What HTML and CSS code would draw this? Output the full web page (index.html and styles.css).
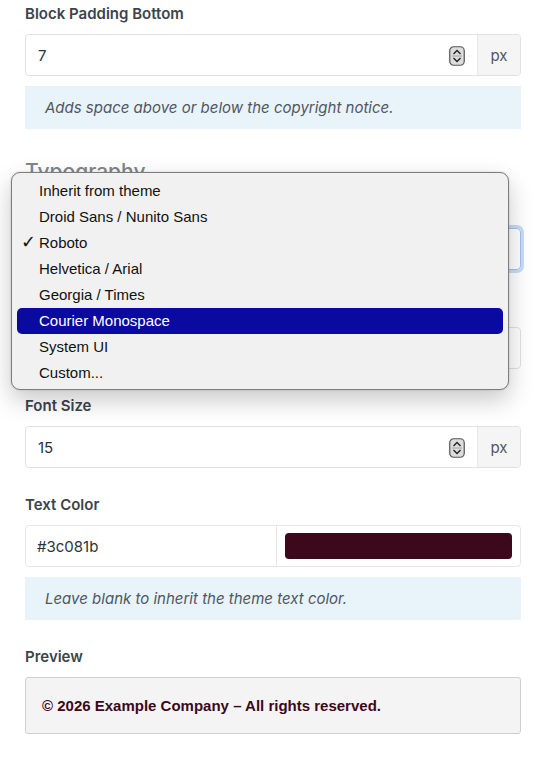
FILE: index.html
```html
<!DOCTYPE html>
<html lang="en">
<head>
  <meta charset="UTF-8">
  <title>Copyright Block Settings</title>
  <link rel="stylesheet" href="styles.css">
</head>
<body>
  <div class="panel">
    <div class="field">
      <label>Block Padding Bottom</label>
      <div class="input-group">
        <div class="number">
          <span class="value">7</span>
          <svg class="stepper" width="16" height="20" viewBox="0 0 16 20">
            <rect x="0.75" y="0.75" width="14.5" height="18.5" rx="4" fill="#dcdcdc" stroke="#555" stroke-width="1.2"/>
            <path d="M4.5 8 L8 4.6 L11.5 8" fill="none" stroke="#222" stroke-width="1.4"/>
            <path d="M4.5 12 L8 15.4 L11.5 12" fill="none" stroke="#222" stroke-width="1.4"/>
            <line x1="3" y1="10" x2="13" y2="10" stroke="#999" stroke-width="0.8"/>
          </svg>
        </div>
        <span class="unit">px</span>
      </div>
      <p class="help">Adds space above or below the copyright notice.</p>
    </div>

    <h3 class="section-title">Typography</h3>

    <div class="field font-family">
      <label>Font Family</label>
      <div class="select focused">Roboto</div>

      <!-- native select popup, open -->
      <ul class="menu">
        <li>Inherit from theme</li>
        <li>Droid Sans / Nunito Sans</li>
        <li class="checked">Roboto</li>
        <li>Helvetica / Arial</li>
        <li>Georgia / Times</li>
        <li class="active">Courier Monospace</li>
        <li>System UI</li>
        <li>Custom...</li>
      </ul>
    </div>

    <div class="field">
      <label>Font Weight</label>
      <div class="select">Bold</div>
    </div>

    <div class="field">
      <label>Font Size</label>
      <div class="input-group">
        <div class="number">
          <span class="value">15</span>
          <svg class="stepper" width="16" height="20" viewBox="0 0 16 20">
            <rect x="0.75" y="0.75" width="14.5" height="18.5" rx="4" fill="#dcdcdc" stroke="#555" stroke-width="1.2"/>
            <path d="M4.5 8 L8 4.6 L11.5 8" fill="none" stroke="#222" stroke-width="1.4"/>
            <path d="M4.5 12 L8 15.4 L11.5 12" fill="none" stroke="#222" stroke-width="1.4"/>
            <line x1="3" y1="10" x2="13" y2="10" stroke="#999" stroke-width="0.8"/>
          </svg>
        </div>
        <span class="unit">px</span>
      </div>
    </div>

    <div class="field">
      <label>Text Color</label>
      <div class="color-group">
        <span class="hex">#3c081b</span>
        <span class="swatch-wrap"><span class="swatch"></span></span>
      </div>
      <p class="help">Leave blank to inherit the theme text color.</p>
    </div>

    <div class="field">
      <label>Preview</label>
      <div class="preview">© 2026 Example Company – All rights reserved.</div>
    </div>
  </div>
</body>
</html>
```

FILE: styles.css
```css
body {
  margin: 0;
  background: #fff;
  font-family: Inter, "Liberation Sans", sans-serif;
  color: #3c434a;
}
.panel {
  padding: 4px 27px 0 25px;
}
.field {
  margin-bottom: 27px;
}
.field label {
  display: block;
  font-size: 15px;
  font-weight: 600;
  line-height: 20px;
  margin-bottom: 10px;
  color: #3c434a;
}
.input-group {
  display: flex;
  height: 42px;
  box-sizing: border-box;
  border: 1px solid #dfe1e4;
  border-radius: 4px;
  overflow: hidden;
}
.number {
  flex: 1;
  display: flex;
  align-items: center;
  padding: 0 12px 0 12px;
  font-size: 15px;
  color: #2c3338;
}
.number .value {
  flex: 1;
}
.stepper {
  display: block;
  margin-top: 1px;
}
.unit {
  width: 42px;
  display: flex;
  align-items: center;
  justify-content: center;
  background: #f5f5f5;
  border-left: 1px solid #e6e7e9;
  font-size: 15px;
  color: #50575e;
}
.help {
  margin: 10px 0 0;
  padding: 12px 20px;
  background: #e8f3fa;
  font-size: 15px;
  line-height: 19px;
  font-style: italic;
  color: #50575e;
}
.section-title {
  margin: 30px 0 13px;
  font-size: 21px;
  font-weight: 500;
  line-height: 26px;
  color: #80868b;
}
.select {
  height: 42px;
  box-sizing: border-box;
  border: 1px solid #dfe1e4;
  border-radius: 4px;
  padding: 0 12px;
  display: flex;
  align-items: center;
  font-size: 15px;
  color: #2c3338;
}
.select.focused {
  border-color: #9ec2f0;
  box-shadow: 0 0 0 3px #c9dcf6;
}
.font-family {
  position: relative;
}
.menu {
  position: absolute;
  left: -14px;
  top: -26px;
  width: 498px;
  height: 218px;
  box-sizing: border-box;
  margin: 0;
  padding: 5px 5px;
  list-style: none;
  background: #f1f1f1;
  border: 1px solid #7d7d7d;
  border-radius: 9px;
  box-shadow: 0 10px 24px rgba(0, 0, 0, 0.22), 0 0 2px rgba(0, 0, 0, 0.2);
  font-family: "Liberation Sans", Arial, sans-serif;
  font-size: 15px;
  color: #111;
  z-index: 5;
}
.menu li {
  height: 26px;
  line-height: 26px;
  padding-left: 22px;
  border-radius: 5px;
  position: relative;
}
.menu li.checked::before {
  content: "✓";
  position: absolute;
  left: 4px;
  top: -1px;
  font-family: "DejaVu Sans", sans-serif;
  font-size: 18px;
  font-weight: bold;
}
.menu li.active {
  background: #0b0aa0;
  color: #fff;
}
.color-group {
  display: flex;
  height: 42px;
  box-sizing: border-box;
  border: 1px solid #e6e7e9;
  border-radius: 4px;
}
.hex {
  width: 251px;
  display: flex;
  align-items: center;
  padding-left: 11px;
  box-sizing: border-box;
  border-right: 1px solid #e6e7e9;
  font-size: 15px;
  color: #2c3338;
}
.swatch-wrap {
  flex: 1;
  padding: 7px 8px;
  display: flex;
}
.swatch {
  flex: 1;
  background: #3c081b;
  border-radius: 4px;
}
.preview {
  height: 57px;
  box-sizing: border-box;
  padding: 0 16px;
  display: flex;
  align-items: center;
  background: #f4f4f4;
  border: 1px solid #cfcfcf;
  border-radius: 3px;
  font-family: "Liberation Sans", Arial, sans-serif;
  font-size: 15px;
  font-weight: bold;
  color: #3c081b;
}
```
